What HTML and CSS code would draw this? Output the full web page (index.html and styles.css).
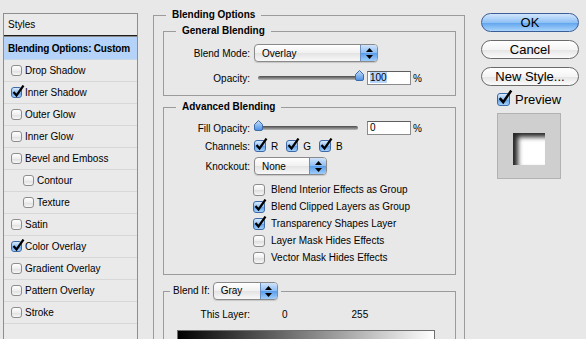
FILE: index.html
```html
<!DOCTYPE html>
<html lang="en">
<head>
    <meta charset="UTF-8">
    <title>Layer Style</title>
    <link rel="stylesheet" href="styles.css">
</head>
<body>
<div class="dialog">
    <div class="styles">
        <div class="styles-head">Styles</div>
        <div class="style-row current">Blending Options: Custom</div>
        <div class="style-row"><span class="cb"></span>Drop Shadow</div>
        <div class="style-row"><span class="cb on"><svg width="13" height="13" viewBox="0 0 13 13"><path d="M1.5 7 L4.5 10.5 L11.5 0.5" fill="none" stroke="#000" stroke-width="2.2"/></svg></span>Inner Shadow</div>
        <div class="style-row"><span class="cb"></span>Outer Glow</div>
        <div class="style-row"><span class="cb"></span>Inner Glow</div>
        <div class="style-row"><span class="cb"></span>Bevel and Emboss</div>
        <div class="style-row sub"><span class="cb"></span>Contour</div>
        <div class="style-row sub"><span class="cb"></span>Texture</div>
        <div class="style-row"><span class="cb"></span>Satin</div>
        <div class="style-row"><span class="cb on"><svg width="13" height="13" viewBox="0 0 13 13"><path d="M1.5 7 L4.5 10.5 L11.5 0.5" fill="none" stroke="#000" stroke-width="2.2"/></svg></span>Color Overlay</div>
        <div class="style-row"><span class="cb"></span>Gradient Overlay</div>
        <div class="style-row"><span class="cb"></span>Pattern Overlay</div>
        <div class="style-row"><span class="cb"></span>Stroke</div>
        <div class="style-row"></div>
    </div>

    <div class="main">
        <fieldset class="group outer">
            <legend>Blending Options</legend>

            <fieldset class="group general">
                <legend>General Blending</legend>
                <div class="field tall">
                    <label>Blend Mode:</label>
                    <div class="select mode">Overlay<span class="stepper"><svg width="7" height="11" viewBox="0 0 7 11"><path d="M3.5 0 L7 4 H0 Z M0 7 H7 L3.5 11 Z" fill="#000"/></svg></span></div>
                </div>
                <div class="field gap9">
                    <label>Opacity:</label>
                    <div class="slider"><svg class="thumb" style="left: 97px" width="9" height="11" viewBox="0 0 9 11"><defs><linearGradient id="tb1" x1="0" y1="0" x2="0" y2="1"><stop offset="0" stop-color="#c9e0fb"/><stop offset="1" stop-color="#4b8fe2"/></linearGradient></defs><path d="M4.5 0.5 L8.5 4.5 V9 Q8.5 10.5 7 10.5 H2 Q0.5 10.5 0.5 9 V4.5 Z" fill="url(#tb1)" stroke="#3d6aa8"/></svg></div>
                    <span class="num"><span class="hilite">100</span></span><span class="pct">%</span>
                </div>
            </fieldset>

            <fieldset class="group advanced">
                <legend>Advanced Blending</legend>
                <div class="field">
                    <label>Fill Opacity:</label>
                    <div class="slider"><svg class="thumb" style="left: -4px" width="9" height="11" viewBox="0 0 9 11"><defs><linearGradient id="tb2" x1="0" y1="0" x2="0" y2="1"><stop offset="0" stop-color="#c9e0fb"/><stop offset="1" stop-color="#4b8fe2"/></linearGradient></defs><path d="M4.5 0.5 L8.5 4.5 V9 Q8.5 10.5 7 10.5 H2 Q0.5 10.5 0.5 9 V4.5 Z" fill="url(#tb2)" stroke="#3d6aa8"/></svg></div>
                    <span class="num">0</span><span class="pct">%</span>
                </div>
                <div class="field gap4">
                    <label>Channels:</label>
                    <span class="chan"><span class="cb on"><svg width="13" height="13" viewBox="0 0 13 13"><path d="M1.5 7 L4.5 10.5 L11.5 0.5" fill="none" stroke="#000" stroke-width="2.2"/></svg></span>R</span>
                    <span class="chan"><span class="cb on"><svg width="13" height="13" viewBox="0 0 13 13"><path d="M1.5 7 L4.5 10.5 L11.5 0.5" fill="none" stroke="#000" stroke-width="2.2"/></svg></span>G</span>
                    <span class="chan"><span class="cb on"><svg width="13" height="13" viewBox="0 0 13 13"><path d="M1.5 7 L4.5 10.5 L11.5 0.5" fill="none" stroke="#000" stroke-width="2.2"/></svg></span>B</span>
                </div>
                <div class="field tall gap4">
                    <label>Knockout:</label>
                    <div class="select knockout">None<span class="stepper"><svg width="7" height="11" viewBox="0 0 7 11"><path d="M3.5 0 L7 4 H0 Z M0 7 H7 L3.5 11 Z" fill="#000"/></svg></span></div>
                </div>
                <div class="checks">
                    <div class="check"><span class="cb"></span>Blend Interior Effects as Group</div>
                    <div class="check"><span class="cb on"><svg width="13" height="13" viewBox="0 0 13 13"><path d="M1.5 7 L4.5 10.5 L11.5 0.5" fill="none" stroke="#000" stroke-width="2.2"/></svg></span>Blend Clipped Layers as Group</div>
                    <div class="check"><span class="cb on"><svg width="13" height="13" viewBox="0 0 13 13"><path d="M1.5 7 L4.5 10.5 L11.5 0.5" fill="none" stroke="#000" stroke-width="2.2"/></svg></span>Transparency Shapes Layer</div>
                    <div class="check"><span class="cb"></span>Layer Mask Hides Effects</div>
                    <div class="check"><span class="cb"></span>Vector Mask Hides Effects</div>
                </div>
            </fieldset>

            <fieldset class="group blendif">
                <legend><span class="legend-row">Blend If:<span class="select gray">Gray<span class="stepper"><svg width="7" height="11" viewBox="0 0 7 11"><path d="M3.5 0 L7 4 H0 Z M0 7 H7 L3.5 11 Z" fill="#000"/></svg></span></span></span></legend>
                <div class="layer-row">
                    <label>This Layer:</label>
                    <span class="lo">0</span>
                    <span class="hi">255</span>
                </div>
                <div class="ramp"></div>
            </fieldset>
        </fieldset>
    </div>

    <div class="side">
        <div class="btn default">OK</div>
        <div class="btn">Cancel</div>
        <div class="btn">New Style...</div>
        <div class="preview-check"><span class="cb on big"><svg width="15" height="15" viewBox="0 0 13 13"><path d="M1.5 7 L4.5 10.5 L11.5 0.5" fill="none" stroke="#000" stroke-width="2.2"/></svg></span>Preview</div>
        <div class="preview">
            <div class="swatch"></div>
        </div>
    </div>
</div>
</body>
</html>
```

FILE: styles.css
```css
body {
    margin: 0;
    background: #e8e8e8;
    font-family: "Liberation Sans", Arial, sans-serif;
    font-size: 10px;
    color: #000;
    overflow: hidden;
}

.dialog {
    display: flex;
    align-items: flex-start;
    height: 339px;
    overflow: hidden;
}

/* styles list on the left */

.styles {
    margin: 13px 0 0 3px;
    width: 133px;
    height: 340px;
    border: 1px solid #8e8e8e;
    background: #eaeaea;
}

.styles-head {
    height: 21px;
    line-height: 21px;
    padding-left: 4px;
    border-bottom: 1px solid #1e1e1e;
    box-shadow: 0 1px 0 #8a8a8a;
    margin-bottom: 1px;
}

.style-row {
    height: 21px;
    display: flex;
    align-items: center;
    gap: 3px;
    padding-left: 7px;
    border-bottom: 1px solid #d7d7d7;
}

.style-row.current {
    height: 22px;
    padding-left: 4px;
    background: #b5d3f8;
    font-weight: bold;
    letter-spacing: -0.2px;
    border-bottom-color: #c9d7e6;
}

.style-row.sub {
    padding-left: 19px;
}

.styles .cb {
    width: 11px;
    height: 11px;
}

/* checkbox */

.cb {
    position: relative;
    flex: none;
    width: 12px;
    height: 12px;
    box-sizing: border-box;
    border: 1px solid #8d8d8d;
    border-radius: 3px;
    background: linear-gradient(#ffffff, #eeeeee 50%, #dedede 51%, #f7f7f7);
}

.cb.on {
    border-color: #3e68a6;
    background: linear-gradient(#d9eafd, #8fbff3 50%, #5f9fea 51%, #a3d0fb);
}

.cb svg {
    position: absolute;
    left: 0;
    top: -3px;
}

.cb.big {
    width: 13px;
    height: 13px;
}

.cb.big svg {
    top: -4px;
}

/* main column */

.main {
    margin-left: 15px;
    width: 312px;
}

.group {
    margin: 0;
    padding: 0;
    min-width: 0;
    border: 1px solid #9b9b9b;
}

.group legend {
    margin-left: 12px;
    padding: 0 6px;
    line-height: 12px;
    font-weight: bold;
}

.outer {
    margin-top: 9px;
    height: 345px;
}

.general,
.advanced,
.blendif {
    margin-left: 9px;
    margin-right: 8px;
}

.general {
    margin-top: 4px;
    padding: 7px 0 10px;
}

.advanced {
    margin-top: 5px;
    padding: 8px 0 8px;
}

.blendif {
    margin-top: 7px;
    height: 60px;
}

.blendif legend {
    margin-left: 6px;
    padding: 0 3px;
    font-weight: normal;
}

.legend-row {
    display: flex;
    align-items: center;
    gap: 3px;
}

.field {
    display: flex;
    align-items: center;
    height: 14px;
}

.field.tall {
    height: 18px;
}

.gap9 {
    margin-top: 9px;
}

.gap4 {
    margin-top: 4px;
}

.field label,
.layer-row label {
    width: 86px;
    margin-right: 4px;
    text-align: right;
}

/* popup menu */

.select {
    display: flex;
    align-items: center;
    box-sizing: border-box;
    height: 18px;
    padding-left: 7px;
    border: 1px solid #8a8a8a;
    border-radius: 4px;
    background: linear-gradient(#ffffff, #f0f0f0 50%, #e3e3e3 51%, #f8f8f8);
    box-shadow: 0 1px 1px rgba(0, 0, 0, 0.15);
}

.select.mode {
    width: 124px;
}

.select.knockout {
    width: 73px;
}

.select.gray {
    width: 65px;
}

.stepper {
    display: flex;
    align-items: center;
    justify-content: center;
    margin-left: auto;
    align-self: stretch;
    width: 16px;
    border-left: 1px solid #6d8fc0;
    border-radius: 0 3px 3px 0;
    background: linear-gradient(#cfe3fb, #8cbdf3 50%, #5a9ce9 51%, #9fcdfb);
}

/* slider and number box */

.slider {
    position: relative;
    width: 100px;
    height: 4px;
    margin-left: 4px;
    border-radius: 2px;
    background: linear-gradient(#4a4a4a, #8a8a8a 60%, #bcbcbc);
}

.thumb {
    position: absolute;
    top: -6px;
}

.num {
    box-sizing: border-box;
    width: 44px;
    height: 14px;
    margin-left: 9px;
    padding-left: 2px;
    line-height: 12px;
    background: #fff;
    border: 1px solid #8b8b8b;
    border-top-color: #5e5e5e;
}

.hilite {
    background: #b5d5ff;
}

.pct {
    margin-left: 2px;
}

.chan {
    display: flex;
    align-items: center;
    gap: 5px;
    margin-right: 8px;
}

.checks {
    margin-top: 6px;
    padding-left: 89px;
}

.check {
    display: flex;
    align-items: center;
    gap: 6px;
    height: 17px;
}

.layer-row {
    display: flex;
    margin-top: 9px;
    line-height: 12px;
}

.lo {
    margin-left: 28px;
}

.hi {
    margin-left: 64px;
}

.ramp {
    margin: 9px 0 0 13px;
    width: 256px;
    height: 20px;
    border: 1px solid #6f6f6f;
    background: linear-gradient(to right, #000, #ffffff);
}

/* buttons and preview */

.side {
    display: flex;
    flex-direction: column;
    margin-left: 16px;
    padding-top: 13px;
    width: 98px;
}

.btn {
    box-sizing: border-box;
    height: 19px;
    margin-bottom: 8px;
    border: 1px solid #6a6a6a;
    border-radius: 10px;
    background: linear-gradient(#ffffff, #f4f4f4 50%, #e4e4e4 51%, #fbfbfb);
    font-size: 13px;
    line-height: 17px;
    text-align: center;
    color: #000;
}

.btn.default {
    border-color: #3b5e98;
    background: linear-gradient(#d2e6fc, #8fc1f5 50%, #5ea3ee 51%, #a9d4fb);
}

.preview-check {
    display: flex;
    align-items: center;
    gap: 5px;
    margin: -2px 0 0 16px;
    height: 14px;
    font-size: 13px;
}

.preview {
    display: flex;
    align-items: center;
    justify-content: center;
    box-sizing: border-box;
    width: 64px;
    height: 66px;
    margin: 7px 0 0 16px;
    border: 1px solid #b2b2b2;
    background: #cfcfcf;
}

.swatch {
    width: 32px;
    height: 32px;
    margin-top: 6px;
    background: #fff;
    box-shadow: inset 5px 4px 5px rgba(0, 0, 0, 0.85);
}
```
